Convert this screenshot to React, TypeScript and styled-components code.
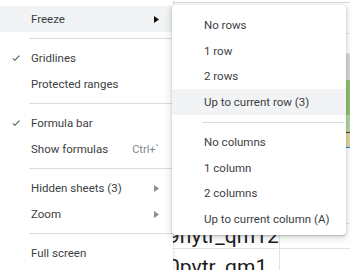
import React from "react";
import styled, { createGlobalStyle } from "styled-components";

const GlobalStyle = createGlobalStyle`
  html, body {
    margin: 0;
    padding: 0;
    background: #fff;
  }
  body {
    font-family: Roboto, "Liberation Sans", Arial, sans-serif;
    -webkit-font-smoothing: antialiased;
  }
`;

type SheetRow = {
  h: number;
  line?: string;
  fill?: string;
  b?: string;
  grid?: boolean;
};

// rows of the spreadsheet that peek out from behind the menus
const sheetRows: SheetRow[] = [
  { h: 3, line: "#dadce0" },
  { h: 31, line: "#e2e3e3" },
  { h: 20, line: "#e2e3e3" },
  { h: 26, fill: "#d6d9dc" },
  { h: 35, fill: "#8fbf6f" },
  { h: 18, fill: "#b3d5a2", line: "#3a3a2a" },
  { h: 15, fill: "#dcd79a", line: "#1a73e8" },
  { h: 76, line: "#e2e3e3", grid: true },
  { h: 25, line: "#e2e3e3", grid: true, b: "9nytr_qm12" },
  { h: 30, grid: true, b: "0pvtr_qm1" },
];

type Item =
  | { kind: "sep" }
  | {
      kind: "item";
      label: string;
      checked?: boolean;
      sub?: boolean;
      active?: boolean;
      shortcut?: string;
    };

const mainItems: Item[] = [
  { kind: "item", label: "Freeze", sub: true, active: true },
  { kind: "sep" },
  { kind: "item", label: "Gridlines", checked: true },
  { kind: "item", label: "Protected ranges" },
  { kind: "sep" },
  { kind: "item", label: "Formula bar", checked: true },
  { kind: "item", label: "Show formulas", shortcut: "Ctrl+`" },
  { kind: "sep" },
  { kind: "item", label: "Hidden sheets (3)", sub: true },
  { kind: "item", label: "Zoom", sub: true },
  { kind: "sep" },
  { kind: "item", label: "Full screen" },
];

const freezeItems: Item[] = [
  { kind: "item", label: "No rows" },
  { kind: "item", label: "1 row" },
  { kind: "item", label: "2 rows" },
  { kind: "item", label: "Up to current row (3)", active: true },
  { kind: "sep" },
  { kind: "item", label: "No columns" },
  { kind: "item", label: "1 column" },
  { kind: "item", label: "2 columns" },
  { kind: "item", label: "Up to current column (A)" },
];

const Check = () => (
  <svg width="10" height="10" viewBox="0 0 24 24">
    <path d="M9 16.17L4.83 12l-1.42 1.41L9 19 21 7l-1.41-1.41z" fill="#3c4043" />
  </svg>
);

const Arrow = ({ dark }: { dark?: boolean }) => (
  <svg width="5" height="7" viewBox="0 0 5 7">
    <polygon points="0,0 5,3.5 0,7" fill={dark ? "#111" : "#8a8d91"} />
  </svg>
);

export default function App() {
  return (
    <>
      <GlobalStyle />
      <Screen>
        <Sheet>
          {sheetRows.map((r, i) => (
            <Row key={i} $h={r.h} $line={r.line}>
              <Cell />
              <Cell $grid={r.grid}>
                {r.b && <CellText>{r.b}</CellText>}
              </Cell>
              <Cell $fill={r.fill} />
            </Row>
          ))}
        </Sheet>

        <MainMenu>
          {mainItems.map((it, i) =>
            it.kind === "sep" ? (
              <Separator key={i} />
            ) : (
              <MenuItem key={i} $active={it.active}>
                <Gutter>{it.checked && <Check />}</Gutter>
                <Label>{it.label}</Label>
                {it.shortcut && <Shortcut>{it.shortcut}</Shortcut>}
                {it.sub && <Arrow dark={it.active} />}
              </MenuItem>
            )
          )}
        </MainMenu>

        <SubMenu>
          {freezeItems.map((it, i) =>
            it.kind === "sep" ? (
              <SubSeparator key={i} />
            ) : (
              <SubItem key={i} $active={it.active}>
                {it.label}
              </SubItem>
            )
          )}
        </SubMenu>
      </Screen>
    </>
  );
}

const Screen = styled.div`
  position: relative;
  width: 350px;
  height: 270px;
  overflow: hidden;
  background: #fff;
`;

const Sheet = styled.div`
  display: flex;
  flex-direction: column;
`;

const Row = styled.div<{ $h: number; $line?: string }>`
  display: grid;
  grid-template-columns: 160px 120px 70px;
  height: ${(p) => p.$h}px;
  box-sizing: border-box;
  border-bottom: ${(p) => (p.$line ? `1px solid ${p.$line}` : "none")};
`;

const Cell = styled.div<{ $fill?: string; $grid?: boolean }>`
  background: ${(p) => p.$fill || "transparent"};
  border-right: ${(p) => (p.$grid ? "1px solid #e2e3e3" : "none")};
  overflow: hidden;
  display: flex;
  align-items: flex-end;
`;

const CellText = styled.span`
  font-family: Roboto, Arial, sans-serif;
  font-size: 21px;
  line-height: 24px;
  color: #1a1a1a;
  padding-left: 8px;
  white-space: nowrap;
`;

const MainMenu = styled.div`
  position: absolute;
  left: 0;
  top: 0;
  width: 173px;
  height: 290px;
  box-sizing: border-box;
  padding: 6px 0;
  background: #fff;
  box-shadow: 0 1px 3px rgba(60, 64, 67, 0.25);
`;

const MenuItem = styled.div<{ $active?: boolean }>`
  display: flex;
  align-items: center;
  height: 26px;
  padding-right: 14px;
  background: ${(p) => (p.$active ? "#f1f3f4" : "transparent")};
  font-size: 11.5px;
  color: #3c4043;
`;

const Gutter = styled.div`
  width: 31px;
  display: flex;
  justify-content: center;
  align-items: center;
`;

const Label = styled.span`
  flex: 1;
  white-space: nowrap;
`;

const Shortcut = styled.span`
  color: #80868b;
  font-size: 11px;
`;

const Separator = styled.div`
  margin: 6px 0 6px 29px;
  border-top: 1px solid #dadce0;
`;

const SubMenu = styled.div`
  position: absolute;
  left: 172px;
  top: 5px;
  width: 174px;
  height: 230px;
  box-sizing: border-box;
  padding: 7.5px 0;
  background: #fff;
  border-radius: 4px;
  box-shadow: 0 1px 2px rgba(60, 64, 67, 0.3), 0 2px 6px 2px rgba(60, 64, 67, 0.15);
`;

const SubItem = styled.div<{ $active?: boolean }>`
  display: flex;
  align-items: center;
  height: 25.5px;
  padding-left: 32px;
  background: ${(p) => (p.$active ? "#f1f3f4" : "transparent")};
  font-size: 11.5px;
  color: #3c4043;
  white-space: nowrap;
`;

const SubSeparator = styled.div`
  margin: 7px 1px 7px 30px;
  border-top: 1px solid #dadce0;
`;
